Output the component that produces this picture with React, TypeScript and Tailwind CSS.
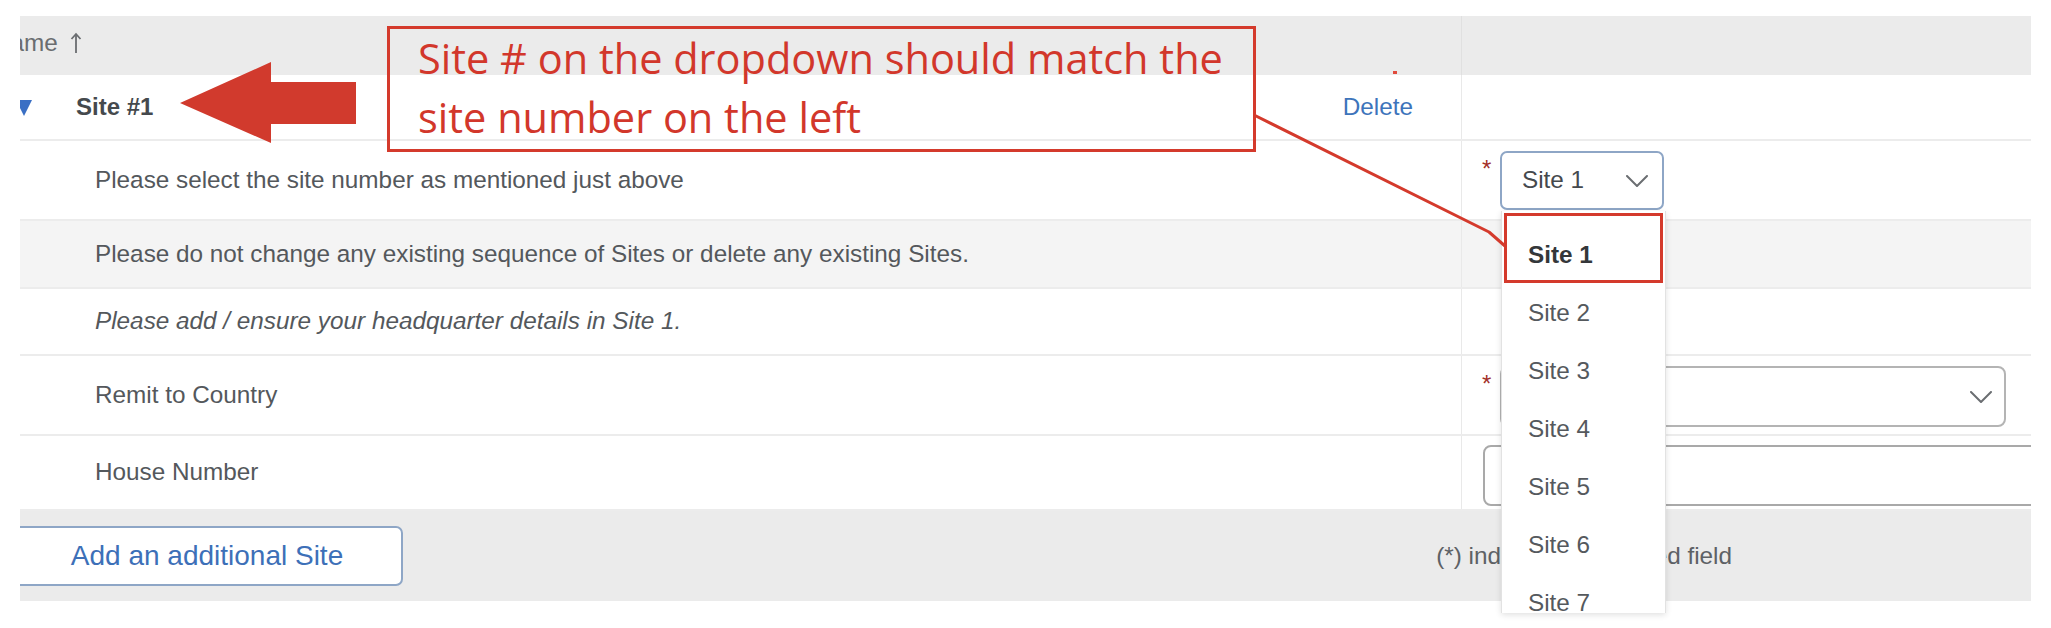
import React from 'react';

// Site detail table with annotation overlays (callout box, arrow, dropdown menu)

const Chevron = ({ className }: { className?: string }) => (
  <svg width="22" height="12" viewBox="0 0 22 12" fill="none" className={className}>
    <polyline points="1,1 11,11 21,1" stroke="#6b6e72" strokeWidth="2" strokeLinejoin="round" strokeLinecap="round" />
  </svg>
);

const Asterisk = () => (
  <span className="mt-[6px] w-[18px] text-[24px] leading-none text-[#a3302a]">*</span>
);

function Row({
  height,
  bg = 'bg-white',
  left,
  right,
  divider = true,
}: {
  height: string;
  bg?: string;
  left: React.ReactNode;
  right?: React.ReactNode;
  divider?: boolean;
}) {
  return (
    <div className={`flex ${height} ${bg} border-b-2 border-[#ececec]`}>
      <div className="flex w-[1441px] shrink-0 items-center">{left}</div>
      <div className={`flex flex-1 ${divider ? 'border-l border-[#e9e9e9]' : ''}`}>{right}</div>
    </div>
  );
}

export default function App() {
  const sites = ['Site 1', 'Site 2', 'Site 3', 'Site 4', 'Site 5', 'Site 6', 'Site 7'];

  return (
    <div className="relative h-[628px] w-[2051px] overflow-hidden bg-white font-['Liberation_Sans',Arial,sans-serif]">
      <div className="pl-[20px] pt-[16px]">
        <div className="w-[2011px] overflow-hidden text-[24.3px] text-[#54585c]">
          {/* Header */}
          <div className="flex h-[59px] bg-[#ebebeb]">
            <div className="flex w-[1441px] shrink-0 items-center gap-[12px] pb-[5px] text-[#6a6d70]">
              <span className="-ml-[27px]">Name</span>
              <svg width="12" height="22" viewBox="0 0 12 22" fill="none">
                <line x1="6" y1="21" x2="6" y2="2" stroke="#6a6d70" strokeWidth="1.8" />
                <polyline points="1.5,7 6,2 10.5,7" stroke="#6a6d70" strokeWidth="1.8" fill="none" />
              </svg>
            </div>
            <div className="flex-1 border-l border-[#e0e0e0]" />
          </div>

          {/* Site #1 */}
          <Row
            height="h-[66px]"
            left={
              <div className="flex w-full items-center justify-between pr-[48px]">
                <div className="flex items-center">
                  <svg width="16" height="16" viewBox="0 0 16 16" className="-ml-[4px] mt-[2px]">
                    <polygon points="0,0 16,0 8,16" fill="#3a6fc4" />
                  </svg>
                  <span className="ml-[44px] font-bold text-[24px] text-[#45494d]">Site #1</span>
                </div>
                <span className="text-[#3d74bb]">Delete</span>
              </div>
            }
          />

          {/* Site number select */}
          <Row
            height="h-[80px]"
            left={<span className="pl-[75px]">Please select the site number as mentioned just above</span>}
            right={
              <div className="flex items-start pl-[20px] pt-[10px]">
                <Asterisk />
                <div className="flex h-[59px] w-[164px] items-center justify-between rounded-[7px] border-2 border-[#8ea6c6] bg-white pl-[20px] pr-[14px] text-[#45494d]">
                  <span>Site 1</span>
                  <Chevron />
                </div>
              </div>
            }
          />

          <Row
            height="h-[68px]"
            bg="bg-[#f4f4f4]"
            left={
              <span className="pl-[75px]">
                Please do not change any existing sequence of Sites or delete any existing Sites.
              </span>
            }
          />

          <Row
            height="h-[67px]"
            left={<span className="pl-[75px] italic">Please add / ensure your headquarter details in Site 1.</span>}
          />

          <Row
            height="h-[80px]"
            left={<span className="pl-[75px]">Remit to Country</span>}
            right={
              <div className="flex items-start pl-[20px] pt-[10px]">
                <Asterisk />
                <div className="flex h-[61px] w-[506px] items-center justify-end rounded-[8px] border-2 border-[#b4b4b4] bg-white pr-[12px]">
                  <Chevron />
                </div>
              </div>
            }
          />

          <Row
            height="h-[75px]"
            left={<span className="pl-[75px]">House Number</span>}
            right={
              <div className="flex items-start pl-[21px] pt-[9px]">
                <div className="h-[61px] w-[640px] shrink-0 rounded-[8px] border-2 border-[#a9a9a9] bg-white" />
              </div>
            }
          />

          {/* Footer */}
          <div className="flex h-[90px] items-center bg-[#ebebeb]">
            <button className="-ml-[9px] h-[60px] w-[392px] rounded-[7px] border-2 border-[#8ea6c6] bg-white text-[28px] text-[#3d70b8]">
              Add an additional Site
            </button>
            <span className="ml-auto pr-[299px] text-[#5d6165]">(*) indicates a required field</span>
          </div>
        </div>
      </div>

      {/* Open dropdown menu */}
      <div className="absolute left-[1501px] top-[211px] h-[402px] w-[165px] overflow-hidden border-x border-[#e2e2e2] bg-white pt-[15px] text-[24.3px] shadow-[0_2px_6px_rgba(0,0,0,0.12)]">
        {sites.map((s, i) => (
          <div
            key={s}
            className={`flex h-[58px] items-center pl-[26px] ${i === 0 ? 'font-bold text-[#34373a]' : 'text-[#55595d]'}`}
          >
            {s}
          </div>
        ))}
      </div>

      {/* Highlight of selected option */}
      <div className="absolute left-[1504px] top-[213px] h-[70px] w-[159px] border-[3px] border-[#d43a2c]" />

      {/* Connector line from callout to option */}
      <svg className="absolute left-0 top-0" width="2051" height="628" fill="none">
        <polyline points="1254,115 1489,232 1505,246" stroke="#d43a2c" strokeWidth="3" strokeLinejoin="round" />
        <rect x="1393" y="71" width="4" height="3" fill="#e04a3c" />
      </svg>

      {/* Red arrow pointing to Site #1 */}
      <svg className="absolute left-0 top-0" width="400" height="160">
        <polygon points="180,103 271,62 271,82 356,82 356,124 271,124 271,143" fill="#d13a2d" />
      </svg>

      {/* Callout box */}
      <div className="absolute left-[387px] top-[26px] h-[126px] w-[869px] border-[3px] border-[#d43a2c] pl-[28px] font-['Open_Sans',sans-serif] text-[41.5px] leading-[59px] text-[#d2372b]">
        Site # on the dropdown should match the
        <br />
        site number on the left
      </div>
    </div>
  );
}
